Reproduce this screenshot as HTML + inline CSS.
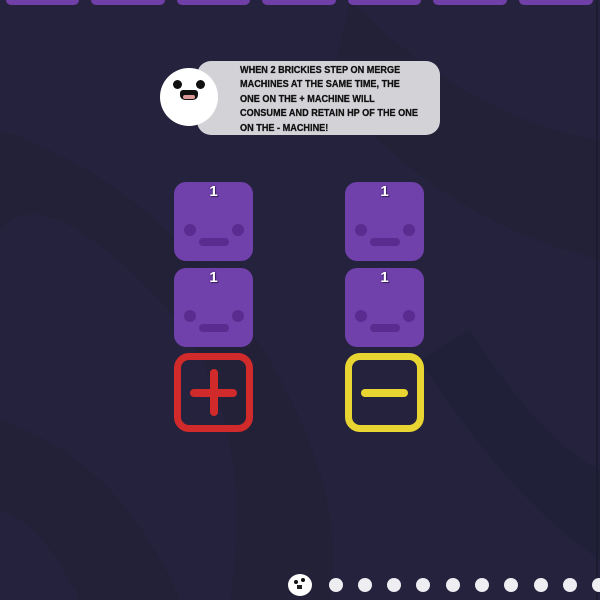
<!DOCTYPE html>
<html><head><style>
body{margin:0;width:600px;height:600px;overflow:hidden;background:#24223d;position:relative;font-family:"Liberation Sans",sans-serif}
.top{position:absolute;top:-10px;height:15px;background:#7040a8;border-radius:5px}
.b{position:absolute;width:79px;height:79px;background:#7040ab;border-radius:12px}
.b .n{position:absolute;top:1px;width:100%;text-align:center;color:#fff;font-weight:bold;font-size:15px;text-shadow:0 0 2px #3a2060,1px 1px 0 #3a2060}
.e{position:absolute;top:42px;width:12px;height:12px;border-radius:50%;background:#5a2c90}
.m{position:absolute;top:56px;left:25px;width:30px;height:8px;border-radius:4px;background:#5a2c90}
.mach{position:absolute;width:65px;height:65px;border:7px solid;border-radius:15px}
.dot{position:absolute;top:578px;width:14px;height:14px;border-radius:50%;background:#eeeef2}
.t{position:absolute;left:240px;white-space:nowrap;font-size:10.5px;font-weight:bold;color:#111;transform:scaleX(.87);transform-origin:0 0;-webkit-text-stroke:.3px #111}
</style></head><body>
<svg width="600" height="600" style="position:absolute;left:0;top:0">
<path d="M0 130 Q150 180 250 330 T330 600 L230 600 Q260 400 150 290 T0 230Z" fill="#1f1f34" opacity=".5"/>
<path d="M350 0 Q470 120 600 140 L600 260 Q440 220 330 90 Z" fill="#1f1f34" opacity=".5"/>
<path d="M0 420 Q120 460 180 600 L80 600 Q40 520 0 510Z" fill="#1f1f34" opacity=".5"/>
<path d="M470 330 Q540 440 600 470 L600 560 Q510 500 420 360Z" fill="#1f1f34" opacity=".4"/>
</svg>
<div style="position:absolute;right:2px;top:0;width:2px;height:600px;background:#1c1c30"></div>
<div class="top" style="left:6px;width:73px"></div>
<div class="top" style="left:91px;width:74px"></div>
<div class="top" style="left:177px;width:73px"></div>
<div class="top" style="left:262px;width:74px"></div>
<div class="top" style="left:348px;width:73px"></div>
<div class="top" style="left:433px;width:74px"></div>
<div class="top" style="left:519px;width:74px"></div>

<div style="position:absolute;left:197px;top:61px;width:243px;height:74px;background:#d3d2d7;border-radius:14px"></div>
<div class="t" style="top:64px">WHEN 2 BRICKIES STEP ON MERGE</div>
<div class="t" style="top:78px">MACHINES AT THE SAME TIME, THE</div>
<div class="t" style="top:93px">ONE ON THE + MACHINE WILL</div>
<div class="t" style="top:107px">CONSUME AND RETAIN HP OF THE ONE</div>
<div class="t" style="top:122px">ON THE - MACHINE!</div>
<div style="position:absolute;left:160px;top:68px;width:58px;height:58px;border-radius:50%;background:#fff"></div>
<div style="position:absolute;left:173px;top:80px;width:9px;height:9px;border-radius:50%;background:#111"></div>
<div style="position:absolute;left:196px;top:80px;width:9px;height:9px;border-radius:50%;background:#111"></div>
<div style="position:absolute;left:180px;top:90px;width:18px;height:10px;border-radius:3px 3px 5px 5px;background:#111"></div>
<div style="position:absolute;left:183px;top:95px;width:12px;height:4px;border-radius:2px;background:#d99"></div>

<div class="b" style="left:174px;top:182px"><div class="n">1</div><div class="e" style="left:10px"></div><div class="e" style="left:58px"></div><div class="m"></div></div>
<div class="b" style="left:174px;top:268px"><div class="n">1</div><div class="e" style="left:10px"></div><div class="e" style="left:58px"></div><div class="m"></div></div>
<div class="b" style="left:345px;top:182px"><div class="n">1</div><div class="e" style="left:10px"></div><div class="e" style="left:58px"></div><div class="m"></div></div>
<div class="b" style="left:345px;top:268px"><div class="n">1</div><div class="e" style="left:10px"></div><div class="e" style="left:58px"></div><div class="m"></div></div>

<div class="mach" style="left:174px;top:353px;border-color:#d02a2a"><div style="position:absolute;left:9px;top:29px;width:47px;height:8px;background:#d02a2a;border-radius:4px"></div><div style="position:absolute;left:29px;top:9px;width:8px;height:47px;background:#d02a2a;border-radius:4px"></div></div>
<div class="mach" style="left:345px;top:353px;border-color:#e8d532"><div style="position:absolute;left:9px;top:29px;width:47px;height:8px;background:#e8d532;border-radius:4px"></div></div>

<div style="position:absolute;left:288px;top:574px;width:24px;height:22px;border-radius:50%;background:#fff"></div>
<div style="position:absolute;left:294px;top:580px;width:4px;height:4px;border-radius:50%;background:#111"></div>
<div style="position:absolute;left:301px;top:578px;width:4px;height:4px;border-radius:50%;background:#111"></div>
<div style="position:absolute;left:297px;top:585px;width:5px;height:4px;background:#222"></div>
<div class="dot" style="left:329px"></div><div class="dot" style="left:358px"></div><div class="dot" style="left:387px"></div><div class="dot" style="left:416px"></div><div class="dot" style="left:446px"></div><div class="dot" style="left:475px"></div><div class="dot" style="left:504px"></div><div class="dot" style="left:534px"></div><div class="dot" style="left:563px"></div><div class="dot" style="left:592px"></div>
</body></html>
